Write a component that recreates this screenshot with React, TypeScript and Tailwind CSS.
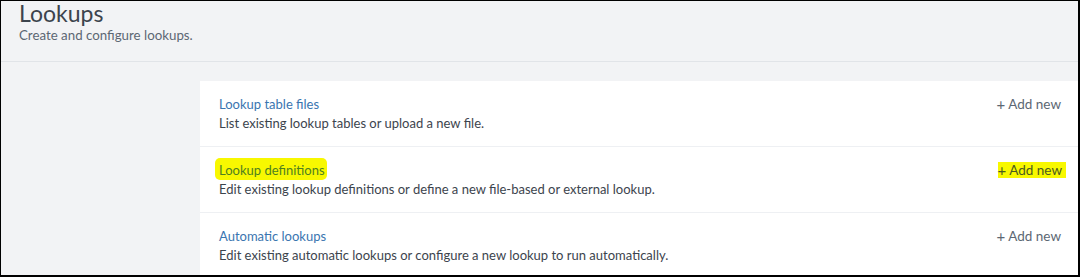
import React from "react";

const rows = [
  { title: "Lookup table files", desc: "List existing lookup tables or upload a new file.", hl: false },
  { title: "Lookup definitions", desc: "Edit existing lookup definitions or define a new file-based or external lookup.", hl: true },
  { title: "Automatic lookups", desc: "Edit existing automatic lookups or configure a new lookup to run automatically.", hl: false },
];

export default function App() {
  return (
    <div
      className="w-[1080px] h-[277px] overflow-hidden bg-[#f2f3f5] border-t border-l border-r-2 border-b-2 border-black flex flex-col"
      style={{ fontFamily: "Lato, 'Open Sans', Arial, sans-serif" }}
    >
      <div className="h-[61px] shrink-0 border-b border-[#e1e4e8] pl-[18px]">
        <div className="text-[23px] leading-[24px] text-[#3c444d]">Lookups</div>
        <div className="text-[13.3px] leading-[16px] text-[#5c6773] mt-[2px]">Create and configure lookups.</div>
      </div>
      <div className="flex-1 pt-[19px] pl-[199px]">
        <div className="bg-white h-full">
          {rows.map((r, i) => (
            <div
              key={r.title}
              className={`h-[66px] flex items-start justify-between pl-[19px] pr-[16px] pt-[15px] ${i < 2 ? "border-b border-[#eef0f3]" : ""}`}
            >
              <div>
                <div className="text-[13px] leading-[16px] text-[#3a75b0]">
                  {r.hl ? (
                    <span className="bg-[#f8f800] rounded-[5px] -ml-[4px] pl-[4px] pr-[2px] pt-[4px] pb-[2px] text-[#4f7f20]">{r.title}</span>
                  ) : (
                    r.title
                  )}
                </div>
                <div className="text-[13px] leading-[16px] text-[#3c444d] mt-[3px]">{r.desc}</div>
              </div>
              <div
                className={`text-[13.5px] leading-[16px] flex items-center gap-[3px] pr-[1px] ${
                  r.hl ? "bg-[#f8f800] text-[#4a5a20] pr-[4px] -mr-[4px]" : "text-[#5c6773]"
                }`}
              >
                <span className="text-[15px] leading-[16px]">+</span>
                <span>Add new</span>
              </div>
            </div>
          ))}
        </div>
      </div>
    </div>
  );
}
